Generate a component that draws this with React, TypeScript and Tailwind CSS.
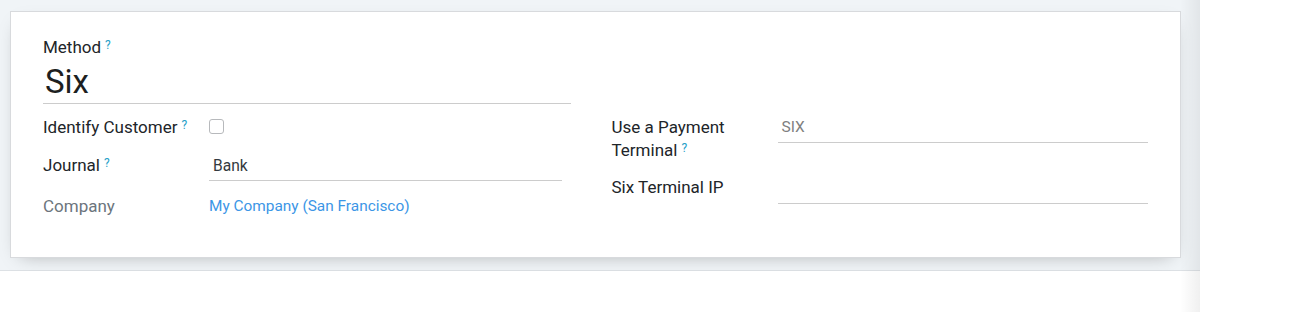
import React from "react";

const Help = () => (
  <sup className="ml-[4px] text-[12px] text-[#26a0c8] relative top-[-4px]">?</sup>
);

export default function App() {
  return (
    <div
      className="flex w-[1298px] h-[312px] bg-white text-[#212529] text-[17px] leading-[23px]"
      style={{ fontFamily: "Roboto, 'Liberation Sans', sans-serif" }}
    >
      <div className="relative w-[1200px] flex flex-col">
        <div className="bg-[#f0f4f7] border-b border-[#dde1e5] pt-[11px] pl-[10px] pr-[19px] pb-[12px]">
          <div className="h-[247px] bg-white border border-[#d8dadd] shadow-[0_6px_18px_-10px_rgba(0,0,0,0.35)] pt-[24px] pl-[32px] pr-[32px]">
            {/* Name */}
            <div className="w-[528px]">
              <div className="h-[27px]">
                Method
                <Help />
              </div>
              <div className="border-b border-[#cccccc] pb-[2px] pl-[2px] text-[33px] leading-[38px] text-[#1d1f21]">
                Six
              </div>
            </div>
            {/* Groups */}
            <div className="flex mt-[12px]">
              {/* Left group */}
              <div className="w-[519px] flex flex-col">
                <div className="flex h-[38px]">
                  <div className="w-[166px] whitespace-nowrap">
                    Identify Customer
                    <Help />
                  </div>
                  <div className="pt-[3px]">
                    <div className="w-[15px] h-[15px] rounded-[3px] border border-[#b7b9bc] bg-white" />
                  </div>
                </div>
                <div className="flex h-[41px]">
                  <div className="w-[166px]">
                    Journal
                    <Help />
                  </div>
                  <div className="flex-1 h-[27px] pt-[1px] pl-[4px] border-b border-[#cccccc] text-[15.6px] text-[#343a40]">
                    Bank
                  </div>
                </div>
                <div className="flex">
                  <div className="w-[166px] text-[#6c757d]">Company</div>
                  <div className="text-[15.4px] text-[#3c96e6]">My Company (San Francisco)</div>
                </div>
              </div>
              {/* Right group */}
              <div className="ml-[50px] w-[537px] flex flex-col">
                <div className="flex h-[60px]">
                  <div className="w-[166px]">
                    Use a Payment
                    <br />
                    Terminal
                    <Help />
                  </div>
                  <div className="flex-1 h-[27px] pl-[4px] border-b border-[#cccccc] text-[15.5px] text-[#808080]">
                    SIX
                  </div>
                </div>
                <div className="flex">
                  <div className="w-[166px]">Six Terminal IP</div>
                  <div className="flex-1 h-[28px] border-b border-[#cccccc]" />
                </div>
              </div>
            </div>
          </div>
        </div>
        <div className="flex-1 bg-white" />
        <div className="pointer-events-none absolute top-0 right-0 bottom-0 w-[20px] bg-gradient-to-r from-transparent to-black/[0.06]" />
      </div>
      <div className="flex-1 bg-white" />
    </div>
  );
}
